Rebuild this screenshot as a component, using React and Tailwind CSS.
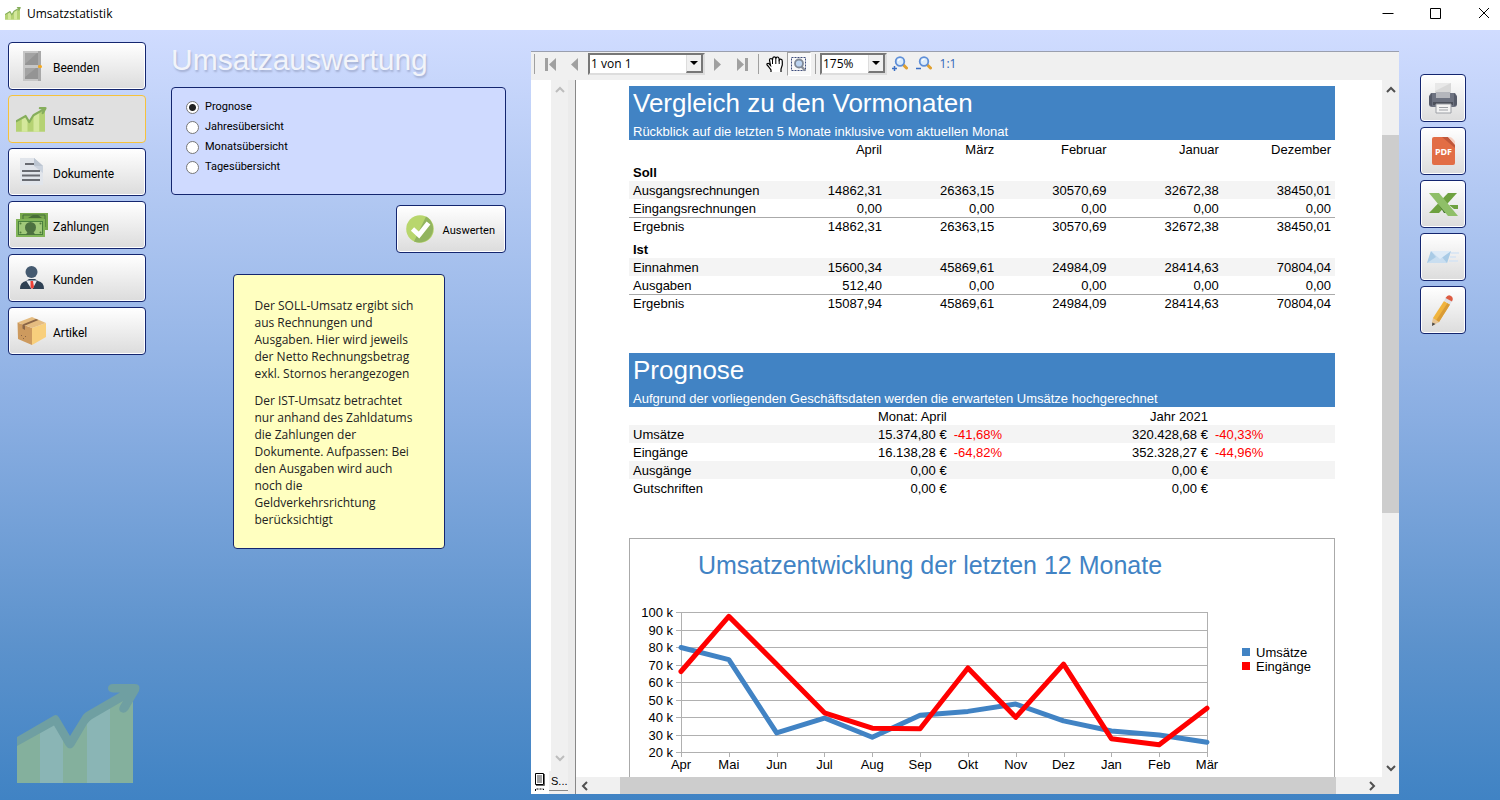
import React, { useState } from "react";

function GrowthIcon({ className, line, light, dark }) {
  return (
    <svg viewBox="0 0 124 100" className={className} preserveAspectRatio="none" aria-hidden="true">
      <path d="M0 56L39 34L53 62L71 32L116 12V99H0Z" fill={dark} />
      <path d="M23 43L39 34L46 50V99H23Z" fill={light} />
      <path d="M70 34L93 22V99H70Z" fill={light} />
      <path d="M0 53L37 31.500Q40 30 42 33.500L53 52L66 31Q68 28.500 71 27L103 8.500H96Q91 8 91 4.500Q91 0 96 0H118Q124 0 122 7L111 26Q108 30 104 28Q101 26 103 22L106 17L75 35Q72 37 70 40L57 62Q53 67 49 62L37 41.500L0 62Z" fill={line} />
    </svg>
  );
}

function DoorIcon() {
  return (
    <svg viewBox="0 0 32 32" className="size-8" aria-hidden="true">
      <rect x="7" y="1" width="18" height="30" fill="#c6c6c6" />
      <path d="M25 1V31H22V1Z" fill="#a8a8a8" />
      <rect x="9" y="3" width="13" height="12" fill="#949494" />
      <path d="M9 3H21L9 14Z" fill="#a3a3a3" />
      <rect x="9" y="18" width="13" height="11" fill="#949494" />
      <path d="M9 18H20L9 27Z" fill="#a3a3a3" />
      <rect x="22" y="15" width="4" height="3" rx="1.500" fill="#f5a81c" />
    </svg>
  );
}

function DocumentIcon() {
  return (
    <svg viewBox="0 0 32 32" className="size-8" aria-hidden="true">
      <path d="M4 2H18L27 10V29H4Z" fill="#e1e5eb" />
      <path d="M18 2L27 10V17L18 10Z" fill="#cbd3de" />
      <path d="M18 2L27 10H18Z" fill="#bcc5d1" />
      <path d="M9 8H18M6 15H24M6 19.500H24M6 24H24" stroke="#686b72" strokeWidth="2" />
    </svg>
  );
}

function MoneyIcon() {
  return (
    <svg viewBox="0 0 32 32" className="size-8" aria-hidden="true">
      <rect x="4" y="4" width="28" height="17" fill="#78a84c" />
      <path d="M7 6H29V18H7Z" fill="none" stroke="#456f38" />
      <path d="M12 9L17 6H22L26 9Z" fill="#476d37" />
      <rect x="0" y="10" width="29" height="18" fill="#81b458" />
      <rect x="2.500" y="12.500" width="24" height="13" fill="#a1c97a" stroke="#4a803e" />
      <circle cx="4.500" cy="14.500" r="1" fill="#507e3c" />
      <circle cx="24.500" cy="14.500" r="1" fill="#507e3c" />
      <circle cx="4.500" cy="23.500" r="1" fill="#507e3c" />
      <circle cx="24.500" cy="23.500" r="1" fill="#507e3c" />
      <circle cx="14.500" cy="18.500" r="5.500" fill="#4d7141" />
      <path d="M10 26Q11 22 14.500 22Q18 22 19 26Z" fill="#4d7141" />
    </svg>
  );
}

function PersonIcon() {
  return (
    <svg viewBox="0 0 32 32" className="size-8" aria-hidden="true">
      <circle cx="15.500" cy="10" r="6" fill="#455a70" />
      <path d="M4 27Q4 20 10 19L13 17H19L22 19Q28 20 28 27Z" fill="#2f4154" />
      <path d="M10 18.500H21L16.500 27H15.500Z" fill="#e8edf3" />
      <path d="M14.500 19H17L18 25L16 27L14.500 25Z" fill="#ef4036" />
    </svg>
  );
}

function BoxIcon() {
  return (
    <svg viewBox="0 0 32 32" className="size-8" aria-hidden="true">
      <path d="M1.500 7.500L16 13V30L2 24Z" fill="#cd9a5e" />
      <path d="M16 13L30 8V22L16 30Z" fill="#f8cf7c" />
      <path d="M1.500 7.500L16 2L30 8L16 13Z" fill="#e5bc80" />
      <path d="M6.500 9.500L20 4L22.500 5L9 10.500Z" fill="#8a6546" />
      <path d="M6.500 9.500L9 10.500V15L6.500 13.500Z" fill="#8a6546" />
      <path d="M5 20L6 21M9 22L10 21M7 23L8 24" stroke="#8a6546" />
    </svg>
  );
}

function CheckIcon() {
  return (
    <svg viewBox="0 0 28 28" className="size-7" aria-hidden="true">
      <circle cx="14" cy="14" r="13.800" fill="#b8d66d" />
      <path d="M20 1.600A13.800 13.800 0 0 1 8 26.400Z" fill="#92b45f" />
      <path d="M6.500 14L13 20L22.500 8" fill="none" stroke="#fff" strokeWidth="4.800" />
    </svg>
  );
}

function PrinterIcon() {
  return (
    <svg viewBox="0 0 30 32" className="h-8 w-[30px]" aria-hidden="true">
      <path d="M7 1H23V12H7Z" fill="#d8d8d8" />
      <path d="M7 1H23L7 9Z" fill="#e8e8e8" />
      <path d="M3 11H27L29 14V22Q29 25 26 25H4Q1 25 1 22V14Z" fill="#6d7280" />
      <path d="M1 15L4 11V24Q1 24 1 21Z" fill="#555a68" />
      <path d="M29 15L26 11V24Q29 24 29 21Z" fill="#555a68" />
      <path d="M8 10H22V16H8Z" fill="#b4b6bc" />
      <path d="M5 20H25V23H5Z" fill="#4d515c" />
      <path d="M8 22H23V31H8Z" fill="#f4f4f4" stroke="#9da0a6" />
      <path d="M11 25.500H20M11 28H20" stroke="#9da0a6" />
    </svg>
  );
}

function PdfIcon() {
  return (
    <svg viewBox="0 0 30 32" className="h-8 w-[30px]" aria-hidden="true">
      <path d="M6 2H20L27 9V28Q27 30 25 30H6Q4 30 4 28V4Q4 2 6 2Z" fill="#e26d45" />
      <path d="M14 2H20L27 9V13Z" fill="#c0573a" />
      <path d="M20 2L27 10V7Q27 6 26 5L24 3Q23 2 21 2Z" fill="#f7cfc0" />
      <text x="15.500" y="20" textAnchor="middle" fontFamily="'Noto Sans', sans-serif" fontSize="9" fontWeight="700" fill="#fff">PDF</text>
    </svg>
  );
}

function ExcelIcon() {
  return (
    <svg viewBox="0 0 30 32" className="h-8 w-[30px]" aria-hidden="true">
      <path d="M20 5H29L11 25H1Z" fill="#6ea13f" />
      <path d="M21 17H30V21H26Z" fill="#6ea13f" />
      <path d="M11 17L16 25H20Z" fill="#40702c" />
      <path d="M1 5H11L30 28H20Z" fill="#8fbf68" />
    </svg>
  );
}

function MailIcon() {
  return (
    <svg viewBox="0 0 32 32" className="size-8" aria-hidden="true">
      <path d="M4 10H24L20 22H0Z" fill="#c9def0" />
      <path d="M4 10L0 22L9 16Z" fill="#a9cbe6" />
      <path d="M24 10L20 22L15 16Z" fill="#a9cbe6" />
      <path d="M4 10H24L13 18Z" fill="#deebf7" />
      <path d="M24 12H32M23 16H29M22 20H31" stroke="#d5e3f4" strokeWidth="1.500" />
    </svg>
  );
}

function PencilIcon() {
  return (
    <svg viewBox="0 0 32 32" className="size-8" aria-hidden="true">
      <path d="M17 7L23 10.500L12 28L5.500 30L6 24Z" fill="#f0b43d" />
      <path d="M20.500 9L23 10.500L12 28L9 26.500Z" fill="#d99b35" />
      <path d="M6 24L12 28L5 32Z" fill="#e7c596" />
      <path d="M5.300 28.500L8.500 30L5 32Z" fill="#4a4a4a" />
      <path d="M17 7L19 3.500L25 7L23 10.500Z" fill="#dcdfe4" />
      <path d="M18.500 4Q21 0 24 2Q27 4 25 7.500Z" fill="#dd5c43" />
    </svg>
  );
}

function MagnifierIcon({ sign }) {
  return (
    <svg viewBox="0 0 16 16" className="size-4" aria-hidden="true">
      <path d="M11 8.500L14.500 12" stroke="#e0a030" strokeWidth="3" strokeLinecap="round" />
      <circle cx="8" cy="5.500" r="4.300" fill="#dcecfb" stroke="#5f8fd8" strokeWidth="1.800" />
      <path d="M6 5Q6.500 3.500 8.500 3.200" fill="none" stroke="#fff" strokeWidth="1.200" />
      {sign === "plus" ? (
        <path d="M0 12.500H5M2.500 10V15" stroke="#3b6fc4" strokeWidth="1.500" />
      ) : (
        <path d="M0 12.500H5" stroke="#3b6fc4" strokeWidth="1.500" />
      )}
    </svg>
  );
}

function MarqueeIcon() {
  return (
    <svg viewBox="0 0 16 16" className="size-4" aria-hidden="true">
      <rect x="0.500" y="1.500" width="14" height="13" fill="none" stroke="#3d4c7c" strokeDasharray="2 1" />
      <path d="M10.500 10.500L14 14.500" stroke="#8a8f98" strokeWidth="2.400" />
      <circle cx="8" cy="7.500" r="4" fill="#bcd3ef" stroke="#7f8896" strokeWidth="1.800" />
    </svg>
  );
}

function HandIcon() {
  return (
    <svg viewBox="0 0 18 17" className="h-[17px] w-[18px]" aria-hidden="true">
      <path d="M5 16V14L2 10Q0 8 1.500 7.500Q3 7 4 9L4.500 9.500L3.500 4Q3.500 2.500 5 2.500Q6 2.500 6.500 4L6.800 2Q7 0.800 8.300 0.800Q9.500 0.800 9.800 2L10.200 2Q10.500 1 11.500 1Q12.800 1 13 2.500L13.200 4Q13.800 3 14.800 3.200Q16.500 3.500 16.300 5.500V9L15 13V16" fill="#fff" stroke="#000" strokeWidth="1.200" />
      <path d="M6.500 4V8M9.800 2V8M13.200 4V8" stroke="#000" />
    </svg>
  );
}

function Chevron({ d, className }) {
  return (
    <svg viewBox="0 0 10 10" className="size-[10px]" aria-hidden="true">
      <path d={d} fill="none" strokeWidth="2" className={className} />
    </svg>
  );
}
const UP = "M1 7L5 3L9 7";
const DOWN = "M1 3L5 7L9 3";
const LEFT = "M7 1L3 5L7 9";
const RIGHT = "M3 1L7 5L3 9";

const growth = (
  <GrowthIcon className="h-[25px] w-[31px]" line="#86ae5c" light="#d4e89c" dark="#b5d273" />
);

const NAV = [
  { label: "Beenden", icon: <DoorIcon /> },
  { label: "Umsatz", icon: growth },
  { label: "Dokumente", icon: <DocumentIcon /> },
  { label: "Zahlungen", icon: <MoneyIcon /> },
  { label: "Kunden", icon: <PersonIcon /> },
  { label: "Artikel", icon: <BoxIcon /> },
];

const ACTIONS = [
  { label: "Drucken", icon: <PrinterIcon /> },
  { label: "Als PDF speichern", icon: <PdfIcon /> },
  { label: "Nach Excel exportieren", icon: <ExcelIcon /> },
  { label: "Per E-Mail senden", icon: <MailIcon /> },
  { label: "Bearbeiten", icon: <PencilIcon /> },
];

const MODES = ["Prognose", "Jahresübersicht", "Monatsübersicht", "Tagesübersicht"];

const MONTHS = ["April", "März", "Februar", "Januar", "Dezember"];
const GROUPS = [
  {
    name: "Soll",
    rows: [
      ["Ausgangsrechnungen", "14862,31", "26363,15", "30570,69", "32672,38", "38450,01"],
      ["Eingangsrechnungen", "0,00", "0,00", "0,00", "0,00", "0,00"],
      ["Ergebnis", "14862,31", "26363,15", "30570,69", "32672,38", "38450,01"],
    ],
  },
  {
    name: "Ist",
    rows: [
      ["Einnahmen", "15600,34", "45869,61", "24984,09", "28414,63", "70804,04"],
      ["Ausgaben", "512,40", "0,00", "0,00", "0,00", "0,00"],
      ["Ergebnis", "15087,94", "45869,61", "24984,09", "28414,63", "70804,04"],
    ],
  },
];

const FORECAST = [
  ["Umsätze", "15.374,80 €", "-41,68%", "320.428,68 €", "-40,33%"],
  ["Eingänge", "16.138,28 €", "-64,82%", "352.328,27 €", "-44,96%"],
  ["Ausgänge", "0,00 €", "", "0,00 €", ""],
  ["Gutschriften", "0,00 €", "", "0,00 €", ""],
];

const CHART_MONTHS = ["Apr", "Mai", "Jun", "Jul", "Aug", "Sep", "Okt", "Nov", "Dez", "Jan", "Feb", "Mär"];
const SALES = [79.7, 72.8, 30.9, 39.4, 28.4, 41, 43.2, 47.4, 37.8, 32, 29.7, 25.6];
const RECEIPTS = [66, 97.5, 70.1, 42.4, 33.6, 33.3, 68, 39.8, 70.2, 27.6, 24.2, 45];

const BUTTON =
  "flex h-12 items-center rounded-[4px] border border-[#14266f] bg-linear-to-b from-white to-[#dcdcdc] shadow-[inset_0_0_0_1px_#fff]";

function Banner({ title, children }) {
  return (
    <header className="flex h-[54px] flex-col justify-between bg-[#4183c4] px-1 text-white">
      <h2 className="pt-[2px] text-[26px] leading-[30px]">{title}</h2>
      <p className="text-[13px] leading-[16px]">{children}</p>
    </header>
  );
}

function ComparisonTable() {
  return (
    <table className="w-full table-fixed border-separate border-spacing-0 text-right text-[13px] leading-[16px]">
      <colgroup>
        <col className="w-[20.5%]" />
        <col className="w-[15.9%]" />
        <col className="w-[15.9%]" />
        <col className="w-[15.9%]" />
        <col className="w-[15.9%]" />
        <col className="w-[15.9%]" />
      </colgroup>
      <thead>
        <tr>
          <td />
          {MONTHS.map((m) => (
            <th key={m} scope="col" className="h-[18px] p-0 pt-0.5 pr-1 font-normal">{m}</th>
          ))}
        </tr>
      </thead>
      {GROUPS.map((g) => (
        <tbody key={g.name}>
          <tr>
            <th scope="rowgroup" colSpan={6} className="h-[23px] p-0 px-1 pt-1.5 text-left font-bold">{g.name}</th>
          </tr>
          {g.rows.map((row, i) => {
            const line = i === 2 ? "border-t border-[#aaa] pt-px" : "pt-0.5";
            return (
              <tr key={row[0]} className={i === 0 ? "bg-[#f4f4f4]" : ""}>
                <th scope="row" className={`h-[18px] pl-1 text-left font-normal ${line}`}>{row[0]}</th>
                {row.slice(1).map((v, j) => (
                  <td key={j} className={`pr-1 ${line}`}>{v}</td>
                ))}
              </tr>
            );
          })}
        </tbody>
      ))}
    </table>
  );
}

function ForecastTable() {
  return (
    <table className="w-full table-fixed border-separate border-spacing-0 text-right text-[13px] leading-[16px]">
      <colgroup>
        <col className="w-[45%]" />
        <col className="w-[10%]" />
        <col className="w-[27%]" />
        <col className="w-[18%]" />
      </colgroup>
      <thead>
        <tr>
          <th scope="col" className="p-0 pt-0.5 font-normal">Monat: April</th>
          <td />
          <th scope="col" className="p-0 pt-0.5 font-normal">Jahr 2021</th>
          <td />
        </tr>
      </thead>
      <tbody>
        {FORECAST.map((r, i) => (
          <tr key={r[0]} className={i % 2 === 0 ? "bg-[#f4f4f4]" : ""}>
            <td className="p-0 pt-0.5 pl-1">
              <div className="flex justify-between">
                <span>{r[0]}</span>
                <span>{r[1]}</span>
              </div>
            </td>
            <td className="p-0 pt-0.5 pl-[7px] text-left text-[#f00]">{r[2]}</td>
            <td className="p-0 pt-0.5">{r[3]}</td>
            <td className="p-0 pt-0.5 pl-[7px] text-left text-[#f00]">{r[4]}</td>
          </tr>
        ))}
      </tbody>
    </table>
  );
}

function Chart() {
  const x = (i) => 51 + (i * 526) / 11;
  const y = (v) => 213 - (v - 20) * 1.75;
  const points = (data) => data.map((v, i) => `${x(i)},${y(v)}`).join(" ");
  const ticks = [100, 90, 80, 70, 60, 50, 40, 30, 20];
  return (
    <svg
      width="704"
      height="290"
      viewBox="0 0 704 290"
      role="img"
      aria-label="Umsatzentwicklung der letzten 12 Monate"
      fontFamily="'Liberation Sans', Arial, sans-serif"
      fontSize="13"
      className="shrink-0"
    >
      <text x="300" y="35" textAnchor="middle" fontSize="25" fill="#4183c4">Umsatzentwicklung der letzten 12 Monate</text>
      {ticks.map((t) => (
        <g key={t}>
          <path d={`M46 ${Math.round(y(t)) + 0.5}H578`} stroke="#b0b0b0" />
          <text x="43" y={Math.round(y(t)) + 5} textAnchor="end">{t} k</text>
        </g>
      ))}
      <path d="M51.500 73V218M577.500 73V218" stroke="#b0b0b0" />
      {CHART_MONTHS.map((m, i) => (
        <g key={m}>
          <path d={`M${Math.round(x(i)) + 0.5} 213V218`} stroke="#b0b0b0" />
          <text x={x(i)} y="230" textAnchor="middle">{m}</text>
        </g>
      ))}
      <polyline points={points(SALES)} fill="none" stroke="#4183c4" strokeWidth="5" strokeLinecap="round" strokeLinejoin="round" />
      <polyline points={points(RECEIPTS)} fill="none" stroke="#f00" strokeWidth="5" strokeLinecap="round" strokeLinejoin="round" />
      <rect x="612" y="109" width="8" height="8" fill="#4183c4" />
      <rect x="612" y="123" width="8" height="8" fill="#f00" />
      <text x="626" y="118">Umsätze</text>
      <text x="626" y="132">Eingänge</text>
    </svg>
  );
}

function ToolSelect({ label, value, className }) {
  return (
    <div className={`relative h-[22px] border-2 border-t-[#777] border-l-[#777] border-r-[#ddd] border-b-[#ddd] bg-white ${className}`}>
      <select aria-label={label} defaultValue={value} className="block h-[18px] w-full appearance-none pl-px font-['Open_Sans','Noto_Sans',sans-serif] text-[12px] leading-[18px] outline-none">
        <option>{value}</option>
      </select>
      <span className="pointer-events-none absolute inset-y-0 right-0 flex w-[17px] items-center justify-center border-r-2 border-b-2 border-l border-r-[#777] border-b-[#777] border-l-[#ddd] bg-[#f0f0f0]">
        <svg viewBox="0 0 8 4" className="h-1 w-2" aria-hidden="true"><path d="M0 0H8L4 4Z" /></svg>
      </span>
    </div>
  );
}

function ToolButton({ label, pressed, children }) {
  return (
    <button type="button" aria-label={label} className={`flex h-6 w-6 shrink-0 items-center justify-center ${pressed ? "border border-t-[#a0a0a0] border-l-[#a0a0a0] border-r-white border-b-white bg-[#f8f8f8]" : ""}`}>
      {children}
    </button>
  );
}

function Separator() {
  return <span className="mx-1 h-5 w-px shrink-0 bg-[#a0a0a0] first:ml-[3px]" />;
}

function Toolbar() {
  return (
    <div role="toolbar" aria-label="Vorschau" className="flex h-[29px] shrink-0 items-center border-t border-[#9a9fae] bg-[#f0f0f0] pb-1">
      <Separator />
      <div className="flex items-center">
        <ToolButton label="Erste Seite">
          <svg viewBox="0 0 12 13" className="h-[13px] w-3"><path d="M0 0H3V13H0ZM11 0V13L4 6.500Z" fill="#a0a0a0" /></svg>
        </ToolButton>
        <ToolButton label="Vorherige Seite">
          <svg viewBox="0 0 8 13" className="h-[13px] w-2"><path d="M7 0V13L0 6.500Z" fill="#a0a0a0" /></svg>
        </ToolButton>
        <ToolSelect label="Seite" value="1 von 1" className="mx-px w-[117px]" />
        <ToolButton label="Nächste Seite">
          <svg viewBox="0 0 8 13" className="h-[13px] w-2"><path d="M0 0V13L7 6.500Z" fill="#a0a0a0" /></svg>
        </ToolButton>
        <ToolButton label="Letzte Seite">
          <svg viewBox="0 0 12 13" className="h-[13px] w-3"><path d="M9 0H12V13H9ZM1 0V13L8 6.500Z" fill="#a0a0a0" /></svg>
        </ToolButton>
      </div>
      <Separator />
      <ToolButton label="Verschieben"><HandIcon /></ToolButton>
      <ToolButton label="Bereich vergrößern" pressed><MarqueeIcon /></ToolButton>
      <Separator />
      <ToolSelect label="Zoom" value="175%" className="mr-px w-[67px]" />
      <ToolButton label="Vergrößern"><MagnifierIcon sign="plus" /></ToolButton>
      <ToolButton label="Verkleinern"><MagnifierIcon sign="minus" /></ToolButton>
      <button type="button" className="w-6 font-['Open_Sans','Noto_Sans',sans-serif] text-[12px] text-[#2f66b8]">1:1</button>
    </div>
  );
}

function Viewer() {
  return (
    <section aria-label="Berichtsvorschau" className="mt-[21px] mb-1.5 flex min-w-0 flex-1 flex-col overflow-hidden bg-white">
      <Toolbar />
      <div className="flex min-h-0 flex-1">
        <div className="flex w-[37px] shrink-0 flex-col">
          <div className="flex min-h-0 flex-1 justify-end">
            <div className="flex w-[17px] flex-col items-center justify-between bg-[#f0f0f0] pt-[5px] pb-2">
              <Chevron d={UP} className="stroke-[#bdbdbd]" />
              <Chevron d={DOWN} className="stroke-[#bdbdbd]" />
            </div>
          </div>
          <div className="flex h-[23px] items-start bg-[#f0f0f0] text-[11px]">
            <button type="button" aria-label="Seitenliste" className="flex h-full w-[18px] justify-center bg-white pt-0.5">
              <svg viewBox="0 0 10 18" className="h-[18px] w-[10px]" aria-hidden="true">
                <path d="M0.500 0.500H8.500V11.500H0.500Z" fill="#fff" stroke="#000" />
                <path d="M2 3H7M2 5H7M2 7H7M2 9H7" stroke="#444" />
                <path d="M9.500 1V12.500H1" fill="none" stroke="#666" />
                <path d="M0.500 18V16H8.500V18" fill="none" stroke="#000" strokeDasharray="2 1" />
              </svg>
            </button>
            <span className="h-5 w-[19px] border-b border-[#888] pl-0.5 leading-[20px]">S...</span>
          </div>
        </div>
        <div className="w-2 shrink-0 border-r border-[#888] bg-[#ebebeb]" />
        <div className="flex min-w-0 flex-1 flex-col">
          <div className="flex min-h-0 flex-1">
            <article className="flex min-w-0 flex-1 flex-col overflow-hidden pt-1.5 pr-[47px] pl-[53px]">
              <div className="shrink-0">
                <Banner title="Vergleich zu den Vormonaten">Rückblick auf die letzten 5 Monate inklusive vom aktuellen Monat</Banner>
                <ComparisonTable />
              </div>
              <div className="mt-[41px] shrink-0">
                <Banner title="Prognose">Aufgrund der vorliegenden Geschäftsdaten werden die erwarteten Umsätze hochgerechnet</Banner>
                <ForecastTable />
              </div>
              <div className="mt-[41px] flex min-h-0 flex-1 overflow-hidden border border-b-0 border-[#aaa]">
                <Chart />
              </div>
            </article>
            <div className="flex w-[17px] shrink-0 flex-col items-center bg-[#f0f0f0] pt-[5px] pb-1">
              <Chevron d={UP} className="stroke-[#505050]" />
              <div className="mt-[40px] h-[55%] w-full bg-[#cdcdcd]" />
              <div className="mt-auto flex">
                <Chevron d={DOWN} className="stroke-[#505050]" />
              </div>
            </div>
          </div>
          <div className="flex h-[17px] shrink-0 items-center bg-[#f0f0f0] pr-[22px] pl-1">
            <Chevron d={LEFT} className="stroke-[#505050]" />
            <div className="ml-[30px] h-full w-[716px] bg-[#cdcdcd]" />
            <div className="ml-auto flex">
              <Chevron d={RIGHT} className="stroke-[#505050]" />
            </div>
          </div>
        </div>
      </div>
    </section>
  );
}

function TitleBar() {
  return (
    <header className="flex h-[30px] shrink-0 items-center bg-white">
      <div className="flex flex-1 items-center gap-1.5 pb-[3px] pl-[5px]">
        <GrowthIcon className="h-[13px] w-4" line="#86ae5c" light="#d4e89c" dark="#b5d273" />
        <span className="font-['Open_Sans','Noto_Sans',sans-serif] text-[12px] leading-[18px]">Umsatzstatistik</span>
      </div>
      <div className="flex gap-4 pb-1">
        <button type="button" aria-label="Minimieren" className="flex w-8 justify-center">
          <svg viewBox="0 0 12 12" className="size-3"><path d="M0.500 6.500H11.500" stroke="#000" /></svg>
        </button>
        <button type="button" aria-label="Maximieren" className="flex w-8 justify-center">
          <svg viewBox="0 0 12 12" className="size-3"><path d="M0.500 1.500H10.500V11.500H0.500Z" fill="none" stroke="#000" /></svg>
        </button>
        <button type="button" aria-label="Schließen" className="flex w-8 justify-center">
          <svg viewBox="0 0 12 12" className="size-3"><path d="M1 1L11 11M11 1L1 11" stroke="#000" /></svg>
        </button>
      </div>
    </header>
  );
}

export default function App() {
  const [mode, setMode] = useState("Prognose");
  return (
    <div className="flex h-screen flex-col overflow-hidden font-['Liberation_Sans',Arial,sans-serif] text-black">
      <TitleBar />
      <main className="flex min-h-0 flex-1 bg-[linear-gradient(to_bottom,#d0dcff,#8aaee2_50%,#5c92cc_80%,#4083c4)] pr-[34px] pl-2">
        <nav aria-label="Hauptmenü" className="flex w-[138px] shrink-0 flex-col gap-[5px] pt-3 pb-4">
          {NAV.map(({ label, icon }) => {
            const active = label === "Umsatz";
            return (
              <button
                key={label}
                type="button"
                aria-current={active ? "page" : undefined}
                className={active ? "flex h-12 items-center rounded-[4px] border border-[#f5c23c] bg-[#e0e0e0] pl-[7px]" : `${BUTTON} pl-[7px]`}
              >
                <span className="flex w-[37px]">{icon}</span>
                <span className="pt-1 font-[Roboto,sans-serif] text-[12px]">{label}</span>
              </button>
            );
          })}
          <GrowthIcon className="mt-auto ml-[9px] h-[100px] w-[124px] shrink-0" line="#6f9fa2" light="#8ab5b5" dark="#84b09d" />
        </nav>

        <section className="ml-[25px] flex w-[335px] shrink-0 flex-col">
          <h1 className="mt-3 text-[30px] leading-[36px] text-[#f2f4fa] [text-shadow:1px_2px_2px_#a3afd2]">Umsatzauswertung</h1>
          <fieldset aria-label="Auswertung" className="mt-[9px] flex h-[108px] flex-col rounded-[4px] border border-[#14266f] bg-[#cfdaff] pt-[9px] pl-[14px]">
            {MODES.map((m) => (
              <label key={m} className="flex h-5 items-center gap-[6px] font-[Roboto,sans-serif] text-[11px]">
                <input
                  type="radio"
                  name="mode"
                  checked={mode === m}
                  onChange={() => setMode(m)}
                  className="size-[13px] appearance-none rounded-full border border-[#777] bg-white checked:bg-[radial-gradient(circle,#222_3px,#fff_4px)]"
                />
                {m}
              </label>
            ))}
          </fieldset>
          <button type="button" className={`${BUTTON} mt-[10px] gap-[9px] self-end pr-[10px] pl-[9px]`}>
            <CheckIcon />
            <span className="pt-1 font-[Roboto,sans-serif] text-[11px]">Auswerten</span>
          </button>
          <aside className="mt-[21px] w-[212px] space-y-[10px] self-center rounded-[4px] border border-[#14266f] bg-[#ffffc0] px-[21px] pt-[22px] pb-[20px] font-['Open_Sans','Noto_Sans',sans-serif] text-[12px] leading-[17px] text-[#222]">
            <p>Der SOLL-Umsatz ergibt sich aus Rechnungen und Ausgaben. Hier wird jeweils der Netto Rechnungsbetrag exkl. Stornos herangezogen</p>
            <p>Der IST-Umsatz betrachtet nur anhand des Zahldatums die Zahlungen der Dokumente. Aufpassen: Bei den Ausgaben wird auch noch die Geldverkehrsrichtung berücksichtigt</p>
          </aside>
        </section>

        <div className="ml-[25px] flex min-w-0 flex-1">
          <Viewer />
        </div>

        <div className="ml-[21px] flex w-[46px] shrink-0 flex-col gap-[5px] pt-[44px]">
          {ACTIONS.map(({ label, icon }) => (
            <button key={label} type="button" aria-label={label} className={`${BUTTON} justify-center`}>
              {icon}
            </button>
          ))}
        </div>
      </main>
    </div>
  );
}
